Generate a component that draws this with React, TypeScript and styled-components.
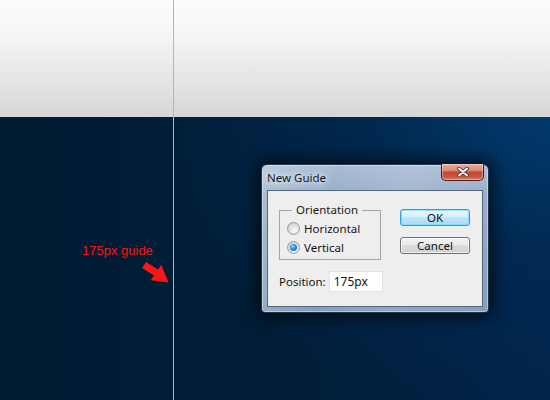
import React from "react";
import styled, { createGlobalStyle } from "styled-components";

const Global = createGlobalStyle`
  html, body { margin: 0; padding: 0; background: #011c36; }
  * { box-sizing: border-box; }
`;

const Screen = styled.div`
  position: relative;
  width: 550px;
  height: 400px;
  overflow: hidden;
  display: flex;
  flex-direction: column;
  font-family: "Noto Sans", "Open Sans", sans-serif;
`;

const Ruler = styled.div`
  height: 117px;
  flex: none;
  background: linear-gradient(180deg, #fdfdfd 0%, #f3f3f3 35%, #e2e2e2 75%, #d6d6d6 100%);
`;

const Canvas = styled.div`
  position: relative;
  flex: 1;
  background:
    radial-gradient(ellipse 420px 300px at 100% 0%, rgba(2, 58, 110, 0.95) 0%, rgba(1, 45, 88, 0.6) 45%, rgba(1, 30, 58, 0) 100%),
    linear-gradient(90deg, #011b33 0%, #011d37 50%, #02244a 100%);
`;

const GuideLine = styled.div`
  position: absolute;
  top: 0;
  bottom: 0;
  left: 173px;
  width: 1px;
  background: #4fdcf5;
`;

const Note = styled.div`
  position: absolute;
  left: 82px;
  top: 126px;
  font-family: "Liberation Sans", Arial, sans-serif;
  font-size: 13px;
  line-height: 15px;
  color: #ff1010;
`;

const Arrow = styled.svg`
  position: absolute;
  left: 138px;
  top: 141px;
`;

const Window = styled.div`
  position: absolute;
  left: 261px;
  top: 47px;
  width: 228px;
  height: 149px;
  display: flex;
  flex-direction: column;
  padding: 0 5px 5px 5px;
  border: 1px solid #26364a;
  border-radius: 6px 6px 4px 4px;
  background:
    linear-gradient(100deg, rgba(255,255,255,0.22) 0%, rgba(255,255,255,0) 30%, rgba(255,255,255,0.1) 60%, rgba(255,255,255,0) 100%),
    linear-gradient(180deg, #a9bdd4 0%, #93abc6 25%, #849ebd 100%);
  box-shadow: inset 0 0 0 1px rgba(255,255,255,0.4), 0 0 16px 5px rgba(0,0,0,0.6);
`;

const TitleBar = styled.div`
  height: 25px;
  flex: none;
  display: flex;
  align-items: flex-start;
  justify-content: space-between;
`;

const Title = styled.div`
  padding-top: 5px;
  font-size: 11.5px;
  line-height: 16px;
  color: #0f1820;
  text-shadow: 0 0 6px rgba(255,255,255,0.95), 0 0 10px rgba(255,255,255,0.8);
`;

const CloseButton = styled.div`
  width: 43px;
  height: 17px;
  margin-top: -1px;
  margin-right: -1px;
  display: flex;
  align-items: center;
  justify-content: center;
  border: 1px solid #4a1f1a;
  border-top: none;
  border-radius: 0 0 5px 5px;
  background: linear-gradient(180deg, #e7b1a4 0%, #d98a77 40%, #bf4a31 52%, #c9573d 80%, #d9826a 100%);
  box-shadow: inset 0 0 0 1px rgba(255,255,255,0.35);
`;

const Client = styled.div`
  flex: 1;
  background: #eeeeee;
  border: 1px solid #55657a;
  display: grid;
  grid-template-columns: 102px 70px;
  column-gap: 19px;
  padding: 12px 13px 0 11px;
  align-items: start;
`;

const LeftColumn = styled.div`
  display: flex;
  flex-direction: column;
`;

const Group = styled.fieldset`
  margin: 0;
  min-width: 0;
  width: 102px;
  padding: 2px 0 2px 7px;
  border: 1px solid #a4a4a4;
  display: flex;
  flex-direction: column;
`;

const Legend = styled.legend`
  margin-left: 5px;
  padding: 0 4px;
  font-size: 11.5px;
  line-height: 14px;
  color: #1a1a1a;
`;

const RadioRow = styled.label`
  height: 19px;
  display: flex;
  align-items: center;
  gap: 4px;
  font-size: 11.5px;
  color: #111;
`;

const RadioDot = styled.span<{ $on?: boolean }>`
  position: relative;
  width: 13px;
  height: 13px;
  flex: none;
  border-radius: 50%;
  border: 1px solid #9a9a9a;
  background: radial-gradient(circle at 60% 65%, #fafafa 0%, #e6e6e6 40%, #c2c2c2 100%);
  &::after {
    content: "";
    display: ${(p) => (p.$on ? "block" : "none")};
    position: absolute;
    left: 2px;
    top: 2px;
    width: 7px;
    height: 7px;
    border-radius: 50%;
    background: radial-gradient(circle at 40% 35%, #8fd4fb 0%, #2a8fd6 45%, #0b4f8f 100%);
  }
`;

const PositionRow = styled.div`
  margin-top: 11px;
  display: flex;
  align-items: center;
  gap: 3px;
  height: 21px;
`;

const FieldLabel = styled.span`
  font-size: 11.5px;
  color: #111;
`;

const Field = styled.div`
  width: 54px;
  height: 21px;
  flex: none;
  background: #ffffff;
  border: 1px solid #e2e3e5;
  padding: 0 4px;
  display: flex;
  align-items: center;
  font-size: 12px;
  color: #111;
`;

const ButtonColumn = styled.div`
  display: flex;
  flex-direction: column;
  gap: 11px;
  padding-top: 6px;
`;

const Button = styled.div<{ $default?: boolean }>`
  height: 17px;
  display: flex;
  align-items: center;
  justify-content: center;
  border-radius: 3px;
  font-size: 11.5px;
  color: #111;
  border: 1px solid ${(p) => (p.$default ? "#3a9ad9" : "#707070")};
  background: ${(p) =>
    p.$default
      ? "linear-gradient(180deg, #eaf6fd 0%, #d9f0fc 45%, #bee6fd 50%, #a7d9f5 100%)"
      : "linear-gradient(180deg, #f2f2f2 0%, #ebebeb 45%, #dddddd 50%, #cfcfcf 100%)"};
  box-shadow: inset 0 0 0 1px ${(p) => (p.$default ? "rgba(110,220,255,0.7)" : "rgba(255,255,255,0.7)")};
`;

export default function App() {
  return (
    <>
      <Global />
      <Screen>
        <Ruler />
        <Canvas>
          <Note>175px guide</Note>
          <Arrow width="34" height="28" viewBox="138 258 34 28">
            <polygon
              points="146,262 158,269.6 161.3,264.8 168.5,282.5 150.6,280.2 154,275.4 142,267.9"
              fill="#ff1414"
            />
          </Arrow>
          <Window>
            <TitleBar>
              <Title>New Guide</Title>
              <CloseButton>
                <svg width="12" height="10" viewBox="0 0 12 10">
                  <path d="M2 1.5 L10 8.5 M10 1.5 L2 8.5" stroke="#3a2a2a" strokeWidth="3.6" strokeLinecap="round" />
                  <path d="M2 1.5 L10 8.5 M10 1.5 L2 8.5" stroke="#ffffff" strokeWidth="2" strokeLinecap="round" />
                </svg>
              </CloseButton>
            </TitleBar>
            <Client>
              <LeftColumn>
                <Group>
                  <Legend>Orientation</Legend>
                  <RadioRow>
                    <RadioDot />
                    Horizontal
                  </RadioRow>
                  <RadioRow>
                    <RadioDot $on />
                    Vertical
                  </RadioRow>
                </Group>
                <PositionRow>
                  <FieldLabel>Position:</FieldLabel>
                  <Field>175px</Field>
                </PositionRow>
              </LeftColumn>
              <ButtonColumn>
                <Button $default>OK</Button>
                <Button>Cancel</Button>
              </ButtonColumn>
            </Client>
          </Window>
        </Canvas>
        <GuideLine />
      </Screen>
    </>
  );
}
